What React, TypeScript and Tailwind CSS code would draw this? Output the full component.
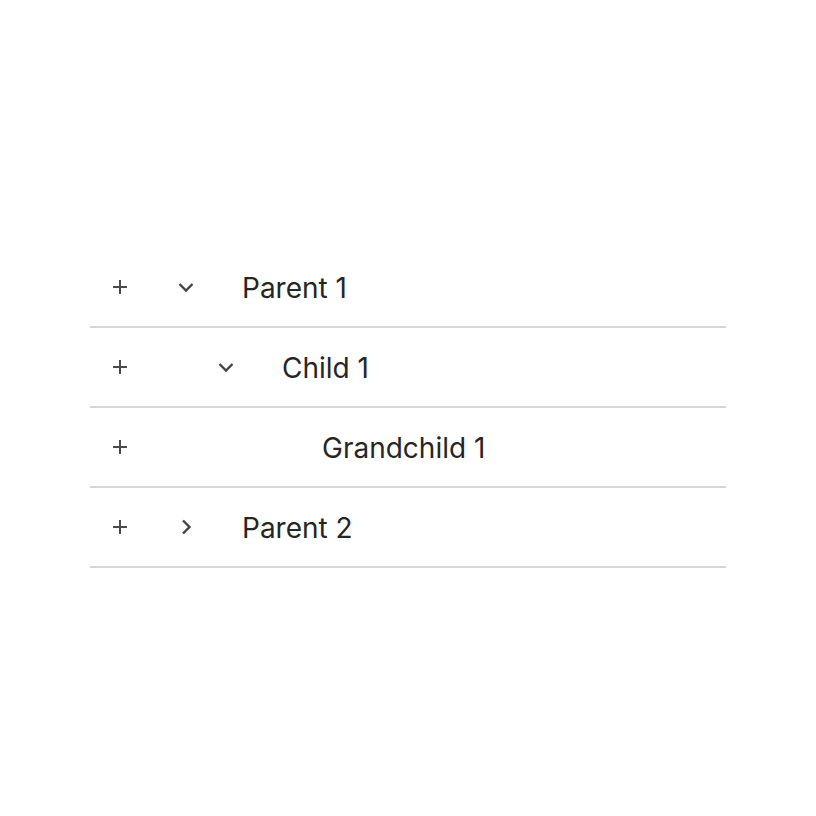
import React from "react";

type Row = { label: string; level: number; chevron: "down" | "right" | null };

const rows: Row[] = [
  { label: "Parent 1", level: 0, chevron: "down" },
  { label: "Child 1", level: 1, chevron: "down" },
  { label: "Grandchild 1", level: 2, chevron: null },
  { label: "Parent 2", level: 0, chevron: "right" },
];

function Plus() {
  return (
    <svg width="16" height="16" viewBox="0 0 16 16" fill="none">
      <path d="M8 1v14M1 8h14" stroke="#4b4b4b" strokeWidth="2" />
    </svg>
  );
}

function Chevron({ dir }: { dir: "down" | "right" }) {
  return (
    <svg
      width="18"
      height="18"
      viewBox="0 0 18 18"
      fill="none"
      style={{ transform: dir === "right" ? "rotate(-90deg)" : undefined }}
    >
      <path
        d="M2.5 6l6.5 6.5L15.5 6"
        stroke="#444"
        strokeWidth="2.4"
        strokeLinecap="butt"
        strokeLinejoin="miter"
      />
    </svg>
  );
}

export default function App() {
  return (
    <div className="w-full h-[816px] bg-white flex items-center justify-center" style={{ fontFamily: "Inter, 'Noto Sans', sans-serif" }}>
      <div className="w-[636px] flex flex-col">
        {rows.map((r) => (
          <div key={r.label} className="h-[80px] flex items-center border-b-2 border-[#d6d6d6]">
            <div className="w-[60px] flex items-center justify-center">
              <Plus />
            </div>
            <div className={r.level === 0 ? "w-0" : r.level === 1 ? "w-[40px]" : "w-[80px]"} />
            <div className="w-[72px] flex items-center justify-center">
              {r.chevron && <Chevron dir={r.chevron} />}
            </div>
            <div className="ml-[20px] text-[28px] text-[#262626] leading-none pt-[2px]">{r.label}</div>
          </div>
        ))}
      </div>
    </div>
  );
}
